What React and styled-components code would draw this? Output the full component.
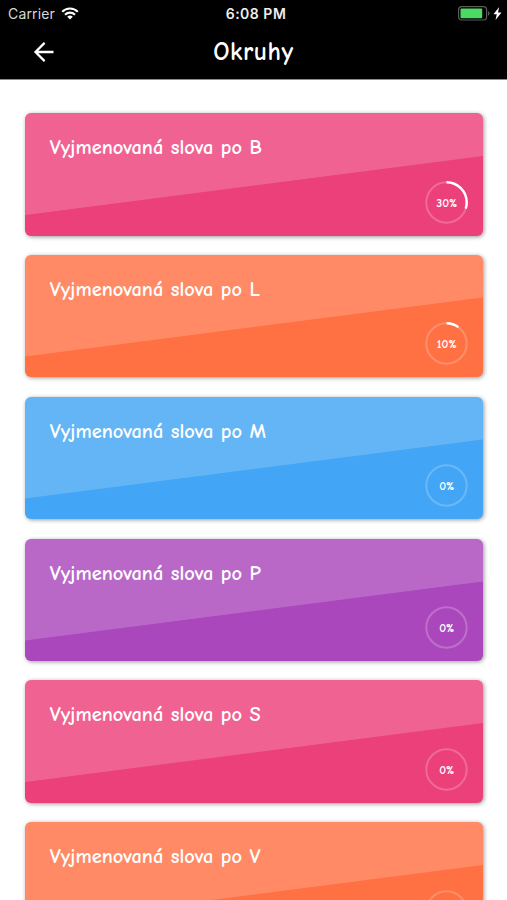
import React from 'react';
import styled, { createGlobalStyle } from 'styled-components';

const GlobalStyle = createGlobalStyle`
  html,
  body {
    margin: 0;
    height: 100%;
    overflow: hidden;
    background-color: #fff;
  }
`;

const Screen = styled.div`
  display: flex;
  flex-direction: column;
  height: 100vh;
  overflow: hidden;
  color: white;
  font-family: 'Comic Neue', Lato, sans-serif;
`;

const Header = styled.header`
  flex: none;
  box-sizing: border-box;
  height: 80px;
  background-color: black;
  border-bottom: 1px solid #8c8c8c;
`;

const StatusBar = styled.div`
  display: grid;
  grid-template-columns: 1fr auto 1fr;
  align-items: center;
  height: 27px;
  padding: 0 5px 0 8px;
  font-family: Inter, sans-serif;
  font-size: 14px;
`;

const Signal = styled.div`
  display: flex;
  align-items: center;
  gap: 6px;
  color: #d8d8d8;
  letter-spacing: 0.15px;
`;

const Clock = styled.span`
  padding-left: 2px;
  color: #eee;
  font-weight: 600;
  letter-spacing: 0.5px;
`;

const Power = styled.div`
  display: flex;
  align-items: center;
  justify-content: flex-end;
  gap: 3px;
`;

const NavBar = styled.div`
  display: grid;
  grid-template-columns: 1fr auto 1fr;
  align-items: center;
  height: 49px;
  padding-left: 32px;
  padding-right: 32px;
`;

const BackButton = styled.button`
  display: flex;
  width: 24px;
  padding: 0;
  border: none;
  background: none;
  color: white;
  cursor: pointer;
`;

const Title = styled.h1`
  margin: 0;
  font-size: 25.5px;
  font-weight: 600;
  letter-spacing: 0.5px;
`;

const List = styled.main`
  display: flex;
  flex-direction: column;
  gap: 19.5px;
  padding: 33.3px 24.2px 0 25.4px;
`;

const Card = styled.section`
  flex: none;
  display: flex;
  flex-direction: column;
  justify-content: space-between;
  box-sizing: border-box;
  height: 122.3px;
  padding: 23px 14.6px 12px 24.4px;
  border-radius: 6px;
  background: ${({ $dark }) => $dark};
  background-image: linear-gradient(
    172.65deg,
    ${({ $light }) => $light} 55.8%,
    ${({ $dark }) => $dark} 56.3%
  );
  box-shadow: 1px 1px 4px rgba(0, 0, 0, 0.4);
`;

const CardTitle = styled.h2`
  margin: 0;
  font-size: 20.4px;
  line-height: 24px;
  font-weight: 600;
  word-spacing: 0.2px;
  white-space: nowrap;
`;

const Ring = styled.div`
  display: grid;
  align-self: flex-end;
  place-items: center;
  width: 43px;
  height: 43px;

  > * {
    grid-area: 1 / 1;
  }
`;

const Percent = styled.span`
  padding-top: 1px;
  font-size: 12px;
  line-height: 14px;
  font-weight: 700;
`;

const topics = [
  { name: 'Vyjmenovaná slova po B', percent: 30, light: '#f06292', dark: '#ec407a' },
  { name: 'Vyjmenovaná slova po L', percent: 10, light: '#ff8a65', dark: '#ff7043' },
  { name: 'Vyjmenovaná slova po M', percent: 0, light: '#64b5f6', dark: '#42a5f5' },
  { name: 'Vyjmenovaná slova po P', percent: 0, light: '#ba68c8', dark: '#ab47bc' },
  { name: 'Vyjmenovaná slova po S', percent: 0, light: '#f06292', dark: '#ec407a' },
  { name: 'Vyjmenovaná slova po V', percent: 0, light: '#ff8a65', dark: '#ff7043' },
];

function WifiIcon() {
  return (
    <svg width="18" height="13" viewBox="0 0 18 13" fill="none" stroke="white" strokeWidth="2.1">
      <path d="M1.2 4.8a11 11 0 0 1 15.6 0" />
      <path d="M4 7.7a7.1 7.1 0 0 1 10 0" />
      <path d="M9 12.4 6.2 9.8a4 4 0 0 1 5.6 0z" fill="white" stroke="none" />
    </svg>
  );
}

function BatteryIcon() {
  return (
    <svg width="32" height="15" viewBox="0 0 32 15">
      <rect x="0.6" y="0.6" width="28" height="13.4" rx="3.2" fill="none" stroke="#5c5c5c" strokeWidth="1.2" />
      <rect x="2.5" y="2.5" width="21.7" height="9.7" rx="1" fill="#4cd964" />
      <path d="M30 5v4.8q1.5-.8 1.5-2.4T30 5z" fill="#5c5c5c" />
    </svg>
  );
}

function BoltIcon() {
  return (
    <svg width="9" height="13" viewBox="0 0 8 12" fill="white">
      <path d="M5.5 0 0.3 6.6h3L2.2 12 7.7 5H4.5z" />
    </svg>
  );
}

function ArrowIcon() {
  return (
    <svg width="24" height="24" viewBox="0 0 24 24" fill="none" stroke="currentColor" strokeWidth="2.3">
      <path d="M21.5 12H4M12.6 2.9 3.5 12l9.1 9.1" />
    </svg>
  );
}

function Progress({ percent }) {
  return (
    <Ring>
      <svg width="43" height="43" viewBox="0 0 43 43" fill="none" stroke="white">
        <circle cx="21.5" cy="21.5" r="20.2" strokeWidth="2" strokeOpacity="0.22" />
        {percent > 0 && (
          <circle
            cx="21.5"
            cy="21.5"
            r="20.2"
            strokeWidth="2.4"
            pathLength="100"
            strokeDasharray={`${percent} 100`}
            transform="rotate(-90 21.5 21.5)"
          />
        )}
      </svg>
      <Percent>{percent}%</Percent>
    </Ring>
  );
}

function App() {
  return (
    <Screen>
      <GlobalStyle />
      <Header>
        <StatusBar>
          <Signal>
            Carrier
            <WifiIcon />
          </Signal>
          <Clock>6:08 PM</Clock>
          <Power>
            <BatteryIcon />
            <BoltIcon />
          </Power>
        </StatusBar>
        <NavBar>
          <BackButton aria-label="Zpět">
            <ArrowIcon />
          </BackButton>
          <Title>Okruhy</Title>
        </NavBar>
      </Header>
      <List>
        {topics.map((topic) => (
          <Card key={topic.name} $light={topic.light} $dark={topic.dark}>
            <CardTitle>{topic.name}</CardTitle>
            <Progress percent={topic.percent} />
          </Card>
        ))}
      </List>
    </Screen>
  );
}

export default App;
